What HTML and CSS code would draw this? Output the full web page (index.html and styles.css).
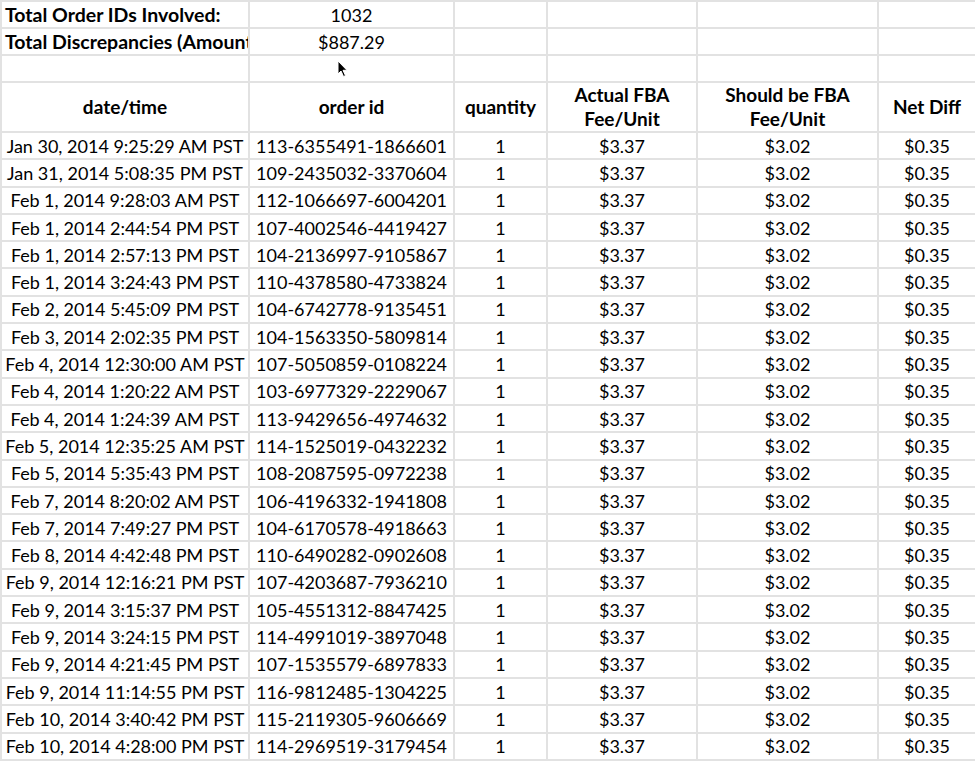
FILE: index.html
```html
<!DOCTYPE html>
<html>
<head>
<meta charset="utf-8">
<link rel="stylesheet" href="styles.css">
</head>
<body>
<div class="sheet">
<table class="grid">
<colgroup>
<col class="c1"><col class="c2"><col class="c3"><col class="c4"><col class="c5"><col class="c6">
</colgroup>
<tr class="top"><td class="label">Total Order IDs Involved:</td><td class="ctr">1032</td><td></td><td></td><td></td><td></td></tr>
<tr class="top"><td class="label clip">Total Discrepancies (Amount)</td><td class="ctr">$887.29</td><td></td><td></td><td></td><td></td></tr>
<tr class="top"><td></td><td></td><td></td><td></td><td></td><td></td></tr>
<tr class="head"><th>date/time</th><th>order id</th><th>quantity</th><th>Actual FBA<br>Fee/Unit</th><th>Should be FBA<br>Fee/Unit</th><th>Net Diff</th></tr>
<tr><td>Jan 30, 2014 9:25:29 AM PST</td><td>113-6355491-1866601</td><td>1</td><td>$3.37</td><td>$3.02</td><td>$0.35</td></tr>
<tr><td>Jan 31, 2014 5:08:35 PM PST</td><td>109-2435032-3370604</td><td>1</td><td>$3.37</td><td>$3.02</td><td>$0.35</td></tr>
<tr><td>Feb 1, 2014 9:28:03 AM PST</td><td>112-1066697-6004201</td><td>1</td><td>$3.37</td><td>$3.02</td><td>$0.35</td></tr>
<tr><td>Feb 1, 2014 2:44:54 PM PST</td><td>107-4002546-4419427</td><td>1</td><td>$3.37</td><td>$3.02</td><td>$0.35</td></tr>
<tr><td>Feb 1, 2014 2:57:13 PM PST</td><td>104-2136997-9105867</td><td>1</td><td>$3.37</td><td>$3.02</td><td>$0.35</td></tr>
<tr><td>Feb 1, 2014 3:24:43 PM PST</td><td>110-4378580-4733824</td><td>1</td><td>$3.37</td><td>$3.02</td><td>$0.35</td></tr>
<tr><td>Feb 2, 2014 5:45:09 PM PST</td><td>104-6742778-9135451</td><td>1</td><td>$3.37</td><td>$3.02</td><td>$0.35</td></tr>
<tr><td>Feb 3, 2014 2:02:35 PM PST</td><td>104-1563350-5809814</td><td>1</td><td>$3.37</td><td>$3.02</td><td>$0.35</td></tr>
<tr><td>Feb 4, 2014 12:30:00 AM PST</td><td>107-5050859-0108224</td><td>1</td><td>$3.37</td><td>$3.02</td><td>$0.35</td></tr>
<tr><td>Feb 4, 2014 1:20:22 AM PST</td><td>103-6977329-2229067</td><td>1</td><td>$3.37</td><td>$3.02</td><td>$0.35</td></tr>
<tr><td>Feb 4, 2014 1:24:39 AM PST</td><td>113-9429656-4974632</td><td>1</td><td>$3.37</td><td>$3.02</td><td>$0.35</td></tr>
<tr><td>Feb 5, 2014 12:35:25 AM PST</td><td>114-1525019-0432232</td><td>1</td><td>$3.37</td><td>$3.02</td><td>$0.35</td></tr>
<tr><td>Feb 5, 2014 5:35:43 PM PST</td><td>108-2087595-0972238</td><td>1</td><td>$3.37</td><td>$3.02</td><td>$0.35</td></tr>
<tr><td>Feb 7, 2014 8:20:02 AM PST</td><td>106-4196332-1941808</td><td>1</td><td>$3.37</td><td>$3.02</td><td>$0.35</td></tr>
<tr><td>Feb 7, 2014 7:49:27 PM PST</td><td>104-6170578-4918663</td><td>1</td><td>$3.37</td><td>$3.02</td><td>$0.35</td></tr>
<tr><td>Feb 8, 2014 4:42:48 PM PST</td><td>110-6490282-0902608</td><td>1</td><td>$3.37</td><td>$3.02</td><td>$0.35</td></tr>
<tr><td>Feb 9, 2014 12:16:21 PM PST</td><td>107-4203687-7936210</td><td>1</td><td>$3.37</td><td>$3.02</td><td>$0.35</td></tr>
<tr><td>Feb 9, 2014 3:15:37 PM PST</td><td>105-4551312-8847425</td><td>1</td><td>$3.37</td><td>$3.02</td><td>$0.35</td></tr>
<tr><td>Feb 9, 2014 3:24:15 PM PST</td><td>114-4991019-3897048</td><td>1</td><td>$3.37</td><td>$3.02</td><td>$0.35</td></tr>
<tr><td>Feb 9, 2014 4:21:45 PM PST</td><td>107-1535579-6897833</td><td>1</td><td>$3.37</td><td>$3.02</td><td>$0.35</td></tr>
<tr><td>Feb 9, 2014 11:14:55 PM PST</td><td>116-9812485-1304225</td><td>1</td><td>$3.37</td><td>$3.02</td><td>$0.35</td></tr>
<tr><td>Feb 10, 2014 3:40:42 PM PST</td><td>115-2119305-9606669</td><td>1</td><td>$3.37</td><td>$3.02</td><td>$0.35</td></tr>
<tr><td>Feb 10, 2014 4:28:00 PM PST</td><td>114-2969519-3179454</td><td>1</td><td>$3.37</td><td>$3.02</td><td>$0.35</td></tr>
</table>
<svg class="cursor" width="12" height="18" viewBox="0 0 12 18"><path d="M1 1 L1 14 L4 11 L6.5 16.5 L8.5 15.6 L6 10.3 L10 10.3 Z" fill="#000" stroke="#fff" stroke-width="1"/></svg>
</div>
</body>
</html>
```
FILE: styles.css
```css
html, body {
  margin: 0;
  padding: 0;
  background: #fff;
}
.sheet {
  position: relative;
  width: 975px;
  height: 763px;
  overflow: hidden;
}
.grid {
  border-collapse: collapse;
  table-layout: fixed;
  width: 975px;
  font-family: Lato, "Open Sans", sans-serif;
  font-size: 18px;
  color: #000;
}
.c1 { width: 248px; }
.c2 { width: 205px; }
.c3 { width: 93px; }
.c4 { width: 150px; }
.c5 { width: 181px; }
.c6 { width: 98px; }
.grid td, .grid th {
  border: 2px solid #e2e2e2;
  padding: 0;
  height: 25.3px;
  text-align: center;
  white-space: nowrap;
  overflow: hidden;
  line-height: 20px;
}
.grid tr.top td {
  height: 25px;
}
.grid td.label {
  text-align: left;
  font-weight: bold;
  font-size: 19.5px;
  padding-left: 3px;
}
.grid tr.head th {
  height: 48px;
  font-weight: bold;
  font-size: 19px;
  line-height: 24px;
}
.cursor {
  position: absolute;
  left: 337px;
  top: 60px;
}
```
